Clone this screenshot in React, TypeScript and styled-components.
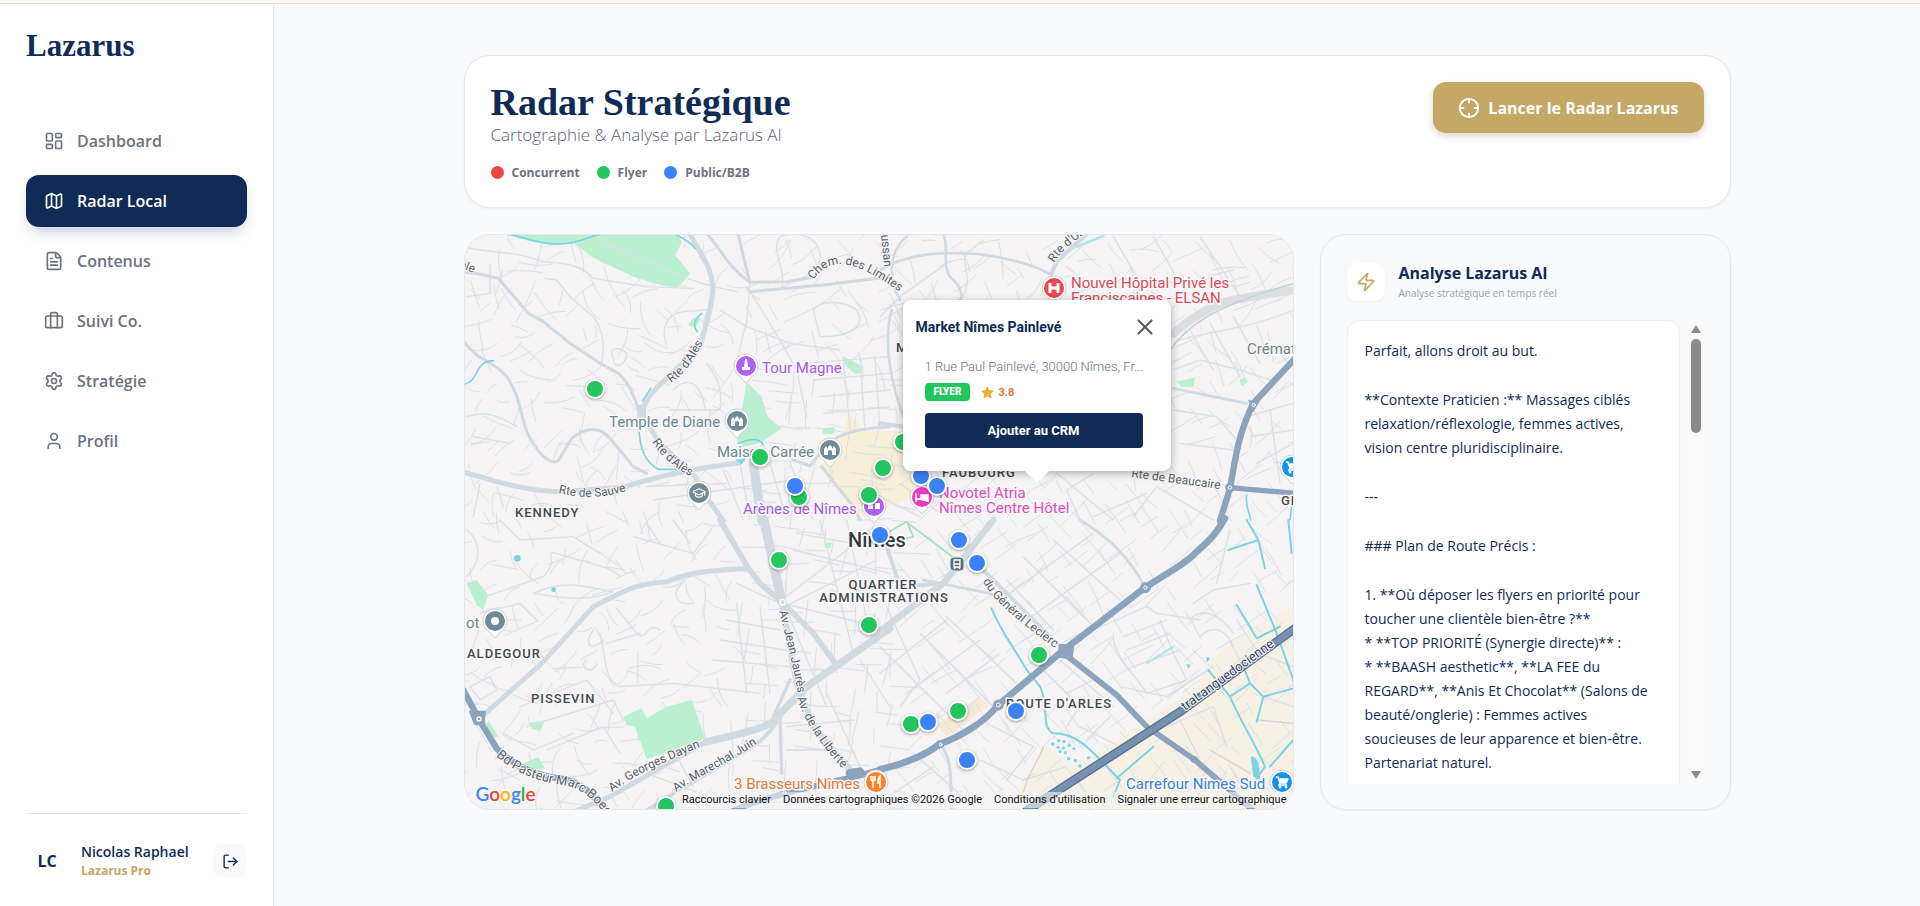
import React from "react";
import styled, { createGlobalStyle } from "styled-components";
import {
  Briefcase,
  Crosshair,
  FileText,
  GraduationCap,
  LayoutDashboard,
  LogOut,
  Map as MapIcon,
  Settings,
  User,
  X,
  Zap,
} from "lucide-react";

const navy = "#0f2b56";
const gold = "#c5a866";
const grey = "#6b7280";
const line = "#e5e7eb";
const sans = `"Segoe UI", "Open Sans", "Noto Sans", sans-serif`;
const serif = `Georgia, "Liberation Serif", serif`;
const roboto = `Roboto, "Liberation Sans", sans-serif`;

const GlobalStyle = createGlobalStyle`
  *, *::before, *::after { box-sizing: border-box; }
  body { margin: 0; background: #f9fafb; font-family: ${sans}; color: ${navy}; }
  button { font: inherit; border: 0; padding: 0; cursor: pointer; }
  h1, h2, h3, p, ul { margin: 0; padding: 0; }
`;

/* ---------- shell ---------- */

const Page = styled.div`
  min-height: 100vh;
  display: flex;
  flex-direction: column;
`;

const TopStrip = styled.div`
  height: 4px;
  background: #fff8f3;
  border-bottom: 1px solid #ecdfd8;
`;

const Shell = styled.div`
  flex: 1;
  display: flex;
`;

const Sidebar = styled.aside`
  width: 274px;
  flex: none;
  display: flex;
  flex-direction: column;
  padding: 24px 26px;
  background: #fff;
  border-right: 1px solid ${line};
`;

const Brand = styled.div`
  font: 700 31px/36px ${serif};
  color: ${navy};
`;

const Nav = styled.nav`
  margin-top: 51px;
  display: flex;
  flex-direction: column;
  gap: 8px;
`;

const NavLink = styled.a<{ $active?: boolean }>`
  height: 52px;
  display: flex;
  align-items: center;
  gap: 13px;
  padding: 0 18px;
  border-radius: 13px;
  font-size: 16px;
  font-weight: 600;
  text-decoration: none;
  color: ${(p) => (p.$active ? "#fff" : grey)};
  background: ${(p) => (p.$active ? navy : "transparent")};
  box-shadow: ${(p) => (p.$active ? "0 8px 14px -4px rgba(15, 43, 86, 0.25)" : "none")};
`;

const Account = styled.div`
  margin-top: auto;
  padding-top: 26px;
  border-top: 1px solid ${line};
  display: flex;
  align-items: center;
`;

const Initials = styled.div`
  width: 42px;
  height: 42px;
  display: grid;
  place-items: center;
  font-size: 16px;
  font-weight: 700;
`;

const AccountText = styled.div`
  flex: 1;
  padding-left: 13px;
  white-space: nowrap;
`;

const AccountName = styled.p`
  font-size: 14px;
  line-height: 20px;
  font-weight: 600;
`;

const AccountPlan = styled.p`
  font-size: 12px;
  line-height: 18px;
  font-weight: 700;
  color: ${gold};
`;

const LogoutButton = styled.button`
  width: 34px;
  height: 34px;
  display: grid;
  place-items: center;
  border-radius: 10px;
  background: #f9fafb;
  color: ${navy};
`;

const Main = styled.main`
  flex: 1;
  min-width: 0;
  padding: 51px 26px;
`;

const Content = styled.div`
  max-width: 1267px;
  margin: 0 auto;
  display: flex;
  flex-direction: column;
  gap: 26px;
`;

/* ---------- header card ---------- */

const HeaderCard = styled.header`
  display: flex;
  justify-content: space-between;
  align-items: flex-start;
  padding: 26px;
  background: #fff;
  border: 1px solid ${line};
  border-radius: 26px;
  box-shadow: 0 1px 3px rgba(15, 23, 42, 0.05);
`;

const Title = styled.h1`
  font: 700 38px/40px ${serif};
`;

const Subtitle = styled.p`
  font-size: 17px;
  line-height: 26px;
  font-weight: 300;
  color: #5c6472;
`;

const Legend = styled.ul`
  margin-top: 16px;
  display: flex;
  gap: 17px;
  list-style: none;
`;

const LegendItem = styled.li<{ $color: string }>`
  display: flex;
  align-items: center;
  gap: 8px;
  font-size: 12px;
  line-height: 17px;
  font-weight: 700;
  color: ${grey};
  &::before {
    content: "";
    width: 13px;
    height: 13px;
    border-radius: 50%;
    background: ${(p) => p.$color};
  }
`;

const LaunchButton = styled.button`
  height: 51px;
  display: flex;
  align-items: center;
  gap: 8px;
  padding: 0 25px;
  border-radius: 13px;
  background: ${gold};
  color: #fff;
  font-size: 16px;
  font-weight: 700;
  white-space: nowrap;
  box-shadow: 0 3px 6px rgba(80, 55, 10, 0.2);
`;

/* ---------- body ---------- */

const Columns = styled.div`
  display: grid;
  grid-template-columns: minmax(0, 830fr) minmax(0, 411fr);
  gap: 26px;
`;

const MapCard = styled.section`
  position: relative;
  height: 576px;
  overflow: hidden;
  border: 1px solid ${line};
  border-radius: 26px;
  background: #f5f4f5;
  font-family: ${roboto};
`;

const MapDrawing = styled.svg`
  display: block;
  width: 100%;
  height: 100%;
  font-family: ${roboto};
`;

const Marker = styled.button<{ $x: number; $y: number; $color: string }>`
  position: absolute;
  left: ${(p) => p.$x}px;
  top: ${(p) => p.$y}px;
  width: 20px;
  height: 20px;
  margin: -10px 0 0 -11px;
  border: 2px solid #fff;
  border-radius: 50%;
  background: ${(p) => p.$color};
  box-shadow: 0 1px 3px rgba(0, 0, 0, 0.35);
`;

const Popup = styled.div`
  position: absolute;
  left: 438px;
  top: 65px;
  width: 268px;
  height: 171px;
  padding: 13px;
  border-radius: 8px;
  background: #fff;
  box-shadow: 0 2px 8px rgba(0, 0, 0, 0.3);
  &::after {
    content: "";
    position: absolute;
    left: 50%;
    top: 100%;
    margin-left: -12px;
    border: 12px solid transparent;
    border-top-color: #fff;
    border-bottom: 0;
  }
`;

const PopupHead = styled.div`
  display: flex;
  align-items: center;
  justify-content: space-between;
  height: 27px;
`;

const PopupTitle = styled.h2`
  font-size: 14px;
  font-weight: 700;
`;

const CloseButton = styled.button`
  display: grid;
  background: none;
  color: #5c5c5c;
`;

const PopupBody = styled.div`
  padding: 17px 15px 0 9px;
`;

const Address = styled.p`
  font-size: 13px;
  line-height: 20px;
  font-weight: 300;
  color: ${grey};
  white-space: nowrap;
`;

const Tags = styled.div`
  display: flex;
  align-items: center;
  gap: 11px;
  margin-top: 6px;
  height: 18px;
`;

const Badge = styled.span`
  padding: 0 9px;
  border-radius: 4px;
  background: #22c55e;
  color: #fff;
  font-size: 10px;
  line-height: 18px;
  font-weight: 900;
`;

const Rating = styled.span`
  display: flex;
  align-items: center;
  gap: 4px;
  font-size: 11px;
  font-weight: 700;
  color: #e8792b;
`;

const CrmButton = styled.button`
  width: 100%;
  height: 35px;
  margin-top: 12px;
  border-radius: 4px;
  background: ${navy};
  color: #fff;
  font-size: 13px;
  font-weight: 700;
`;

const Attribution = styled.div`
  position: absolute;
  right: 0;
  bottom: 1px;
  display: flex;
  height: 16px;
  background: rgba(245, 245, 245, 0.6);
`;

const AttributionLink = styled.a`
  padding: 0 6px;
  font-size: 11px;
  line-height: 16px;
  color: #111;
  text-decoration: none;
  white-space: nowrap;
`;

const GoogleMark = styled.a`
  position: absolute;
  left: 11px;
  bottom: 2px;
  font: 600 19px/26px Lato, sans-serif;
  text-decoration: none;
`;

const Letter = styled.span<{ $color: string }>`
  color: ${(p) => p.$color};
`;

const Panel = styled.section`
  height: 576px;
  display: flex;
  flex-direction: column;
  padding: 26px 26px 25px;
  border: 1px solid ${line};
  border-radius: 26px;
  box-shadow: 0 1px 2px rgba(15, 23, 42, 0.05);
`;

const PanelHead = styled.div`
  display: flex;
  align-items: center;
  gap: 14px;
  height: 41px;
`;

const ZapTile = styled.div`
  width: 38px;
  height: 38px;
  display: grid;
  place-items: center;
  border-radius: 9px;
  background: #fff;
  color: ${gold};
  box-shadow: 0 1px 2px rgba(15, 23, 42, 0.06);
`;

const PanelTitle = styled.h2`
  font-size: 16px;
  line-height: 22px;
  font-weight: 700;
`;

const PanelNote = styled.p`
  font-size: 10px;
  line-height: 18px;
  color: #9ca3af;
`;

const Scroller = styled.div`
  flex: 1;
  min-height: 0;
  margin-top: 18px;
  display: flex;
  gap: 8px;
`;

const Report = styled.div`
  flex: 1;
  min-width: 0;
  overflow: hidden;
  display: flex;
  flex-direction: column;
  gap: 25px;
  padding: 18px 17px 0;
  border: 1px solid #f0f1f4;
  border-bottom: 0;
  border-radius: 13px 13px 0 0;
  background: #fff;
`;

const Paragraph = styled.p`
  font-size: 14px;
  line-height: 24px;
  white-space: pre-line;
`;

const Track = styled.div`
  width: 16px;
  display: flex;
  flex-direction: column;
  align-items: center;
  padding: 5px 0;
  background: #fbfbfc;
`;

const Arrow = styled.span<{ $down?: boolean }>`
  border: 5px solid transparent;
  ${(p) =>
    p.$down
      ? "margin-top: auto; border-top: 8px solid #8b8b8b; border-bottom: 0;"
      : "border-bottom: 8px solid #8b8b8b; border-top: 0;"}
`;

const Thumb = styled.div`
  width: 10px;
  height: 94px;
  margin-top: 6px;
  border-radius: 5px;
  background: #8b8b8b;
`;

/* ---------- map data ---------- */

const nav = [
  { label: "Dashboard", icon: LayoutDashboard },
  { label: "Radar Local", icon: MapIcon, active: true },
  { label: "Contenus", icon: FileText },
  { label: "Suivi Co.", icon: Briefcase },
  { label: "Stratégie", icon: Settings },
  { label: "Profil", icon: User },
];

const GREEN = "#22c55e";
const BLUE = "#3b82f6";

const markers: [number, number, string][] = [
  [131, 154, GREEN],
  [296, 222, GREEN],
  [419, 233, GREEN],
  [439, 207, GREEN],
  [405, 260, GREEN],
  [335, 262, GREEN],
  [315, 325, GREEN],
  [405, 390, GREEN],
  [202, 571, GREEN],
  [575, 420, GREEN],
  [494, 476, GREEN],
  [447, 489, GREEN],
  [331, 251, BLUE],
  [457, 241, BLUE],
  [473, 251, BLUE],
  [416, 300, BLUE],
  [495, 305, BLUE],
  [513, 328, BLUE],
  [552, 476, BLUE],
  [464, 487, BLUE],
  [503, 525, BLUE],
];

/** Deterministic side streets, following the dominant street direction of each district. */
function sideStreets(): string {
  let seed = 7;
  const rnd = () => {
    seed = (seed * 16807) % 2147483647;
    return seed / 2147483647;
  };
  const out: string[] = [];
  for (let y = 4; y < 575; y += 20) {
    for (let x = 4; x < 830; x += 21) {
      const px = x + rnd() * 14;
      const py = y + rnd() * 14;
      let base: number;
      let loose = 0.3;
      if (px < 270) {
        base = rnd() * 3;
        loose = 1;
      } else if (px < 430 && py > 130) {
        base = 0.1;
        loose = 0.2;
      } else if (py < 230) {
        base = -0.5;
        loose = 0.6;
      } else {
        base = -0.65;
        loose = 0.25;
      }
      const a = base + (rnd() < 0.5 ? Math.PI / 2 : 0) + (rnd() - 0.5) * loose;
      const len = 12 + rnd() * 22;
      const mx = px + Math.cos(a) * len * 0.5;
      const my = py + Math.sin(a) * len * 0.5;
      const bend = a + (rnd() - 0.5) * loose * 2;
      const ex = mx + Math.cos(bend) * len * 0.6;
      const ey = my + Math.sin(bend) * len * 0.6;
      out.push(
        `M${px.toFixed(1)} ${py.toFixed(1)}Q${mx.toFixed(1)} ${my.toFixed(1)} ${ex.toFixed(1)} ${ey.toFixed(1)}`
      );
    }
  }
  return out.join("");
}

const streets = sideStreets();

type TileProps = { x: number; y: number; children: React.ReactNode };

/** A quarter of the map, drawn at three times its displayed size. */
const Tile = ({ x, y, children }: TileProps) => (
  <g transform={`translate(${x} ${y}) scale(0.33333)`} fill="none" strokeLinecap="round" strokeLinejoin="round">
    {children}
  </g>
);

const ROAD = "#d1dae1";
const SMALL = "#dae1e7";
const WATER = "#7dd3e3";
const PARK = "#baf0d0";
const HIGHWAY = "#8ba3bd";

const BaseMap = () => (
  <>
    <rect width="830" height="575" fill="#f5f3f4" />
    {/* commercial and rural land */}
    <path d="M385 178 L400 196 L450 196 L450 262 L400 282 L385 270 L354 232 L372 218 Z" fill="#f8efd9" />
    <path d="M829 370 L790 392 L745 425 L735 450 L600 540 L560 574 L829 574 Z" fill="#f6f1e4" />
    <path d="M580 510 L622 538 L570 574 L545 574 Z" fill="#f6f1e4" />
    <path d="M473 490 L515 462 L525 470 L483 502 Z" fill="#f7ead4" />
    <path d={streets} fill="none" stroke={SMALL} strokeWidth="1" />

    <Tile x={-4} y={-5}>
      <g fill={PARK}>
        <path d="M130 12 L655 12 L665 40 L645 75 L690 130 L655 172 C600 170 560 150 520 140 C460 110 400 90 370 60 L340 40 C300 45 260 42 215 35 Z" />
        <path d="M860 455 L905 500 L922 560 L965 595 L900 640 L850 650 L830 630 Z" />
        <path d="M700 262 L722 265 L705 295 L685 285 Z" />
        <path d="M1150 380 L1210 410 L1205 430 L1185 432 L1155 405 Z" />
        <path d="M1090 595 L1125 592 L1120 612 L1088 612 Z" />
      </g>
      <g stroke={SMALL} strokeWidth="4">
        <path d="M410 12 C440 60 520 70 580 100 C640 130 700 160 830 185" />
        <path d="M12 50 C80 70 160 60 250 95 C330 100 370 110 400 145 L560 170 L700 175" />
        <path d="M90 105 L90 190 L20 200" />
        <path d="M255 145 L290 150 L330 200 L400 260 C430 300 435 350 425 400" />
        <path d="M460 385 C440 350 480 350 500 370 C500 410 460 420 460 385" />
        <path d="M620 345 C600 300 620 250 670 245 L740 240" />
        <path d="M740 400 C760 430 790 460 780 540 L630 540 M640 480 C680 440 720 450 735 535" />
        <path d="M965 175 C980 120 930 60 960 20 C1010 0 1080 20 1080 80 C1080 140 990 150 965 175" />
        <path d="M1060 240 C1080 210 1150 210 1190 240 C1220 290 1170 320 1080 320 Z" />
        <path d="M780 240 L860 290 L990 340 L1140 360 M860 170 C900 230 950 310 1010 420 L1040 560" />
        <path d="M830 400 L850 310 L860 280 L870 160" />
        <path d="M1030 400 L1290 380 M1060 450 L1290 430 M1080 500 L1290 480 M1090 550 L1290 530 M1150 380 L1170 600 M1200 380 L1215 600 M1245 380 L1260 600" />
        <path d="M560 770 L800 760 M580 810 L1000 750 M790 720 L850 870 M840 700 L870 870 M930 700 L980 870 M990 700 L1060 870" />
        <path d="M20 560 C80 540 120 560 170 590 M40 620 L150 640 M60 760 L40 860 M110 770 L130 830" />
      </g>
      <g stroke={ROAD}>
        <g strokeWidth="9">
          <path d="M0 125 L45 130 L115 145 L205 250 L250 275 L330 340 L420 400 L475 430 C520 470 525 520 545 560" />
          <path d="M12 335 C60 400 100 390 140 440 C190 510 180 590 220 640 C250 690 285 710 300 685 L335 625 C380 590 420 590 450 625 L520 710 L560 730" />
          <path d="M740 12 C780 50 800 110 870 157 L980 155 L1060 142" />
          <path d="M835 12 L850 80 L870 157" />
          <path d="M870 185 L1090 165 L1290 140" />
          <path d="M1000 690 L1050 708 C1100 650 1100 600 1290 590" />
          <path d="M1085 710 L1180 830 L1200 870" />
        </g>
        <path d="M0 725 L60 740 C150 770 250 785 300 785 L490 772 C600 735 700 715 840 698" strokeWidth="15" />
        <path d="M690 12 C720 70 755 110 758 170 C758 230 735 290 720 350 L620 445 C570 490 545 520 548 560 L600 640 L705 740 L745 810 L790 872" strokeWidth="15" />
        <path d="M880 700 L905 872" strokeWidth="28" />
        <path d="M545 525 L545 590" strokeWidth="26" strokeLinecap="butt" />
      </g>
      <g stroke={WATER} strokeWidth="5">
        <path d="M140 12 C200 22 240 45 300 42 C360 40 380 20 420 14" />
        <path d="M15 462 C60 450 40 395 100 392" />
        <path d="M725 250 C700 270 700 290 712 305 M572 475 L548 512" />
        <path d="M537 600 C540 660 560 700 595 718 L690 718" />
        <path d="M650 15 C670 25 690 35 705 55" />
        <path d="M835 640 C860 630 900 620 910 645" />
      </g>
      <path d="M825 690 L860 684 L845 702 Z" fill={WATER} />
    </Tile>

    <Tile x={416} y={-5}>
      <g fill={PARK}>
        <path d="M890 455 L945 442 L940 470 L905 470 Z" />
        <path d="M1078 450 L1095 442 L1105 455 L1085 468 Z" />
      </g>
      <g stroke={SMALL} strokeWidth="4">
        <path d="M0 260 L60 200 L200 100 M250 200 C280 130 240 100 260 70 L310 30" />
        <path d="M560 110 L640 170 L760 140 L900 160 L1060 120 M700 20 L770 140 M820 20 L900 160 M960 20 L1080 200" />
        <path d="M900 330 C1000 300 1100 300 1240 240 M930 300 L1000 420 M990 280 L1080 440 M1060 260 L1140 400" />
        <path d="M880 420 L960 390 L1080 420 L1170 450 M880 540 L1010 560 L1080 640 M900 640 L1060 660" />
        <path d="M600 870 L560 780 L640 730 M640 860 L800 790 M760 860 L830 770 L1000 870" />
        <path d="M1100 560 L1240 520 M1110 620 L1240 600 M1130 700 L1240 640 M1170 540 L1200 760" />
        <path d="M0 800 L120 860 M60 760 L180 850 M530 730 L700 870" />
      </g>
      <g stroke={ROAD}>
        <g strokeWidth="8">
          <path d="M190 12 C210 60 180 120 220 150 C260 190 240 220 235 210" />
          <path d="M0 120 C80 70 180 65 290 72 C400 85 470 110 515 135" />
          <path d="M80 20 C30 60 20 140 60 210 M35 240 C10 330 30 450 70 560" />
          <path d="M515 130 L530 95 L620 12" strokeWidth="12" />
          <path d="M880 475 L1100 520" />
          <path d="M0 580 L70 590" strokeWidth="12" />
        </g>
        <path d="M880 310 C940 260 1000 220 1060 210 C1120 200 1180 185 1245 182" strokeWidth="26" stroke="#dcdfe2" />
        <path d="M870 360 C920 290 990 230 1245 160" strokeWidth="5" stroke="#c9d3da" />
      </g>
      <g stroke={WATER} strokeWidth="5">
        <path d="M590 50 L670 18" strokeWidth="8" stroke="#b4e4ee" />
        <path d="M1100 795 C1095 830 1110 850 1112 870 M1240 790 L1230 870" />
      </g>
      <g stroke={HIGHWAY}>
        <path d="M1245 385 L1120 520 C1070 620 1065 700 1050 775 L1020 872" strokeWidth="19" />
        <path d="M1050 773 L1245 790" strokeWidth="16" />
        <path d="M1105 510 L1138 515 L1120 545 Z" fill={HIGHWAY} />
        <circle cx="1050" cy="773" r="14" fill={HIGHWAY} />
      </g>
      <circle cx="1121" cy="525" r="5" stroke="#fff" strokeWidth="3" />
      <circle cx="1050" cy="773" r="5" stroke="#fff" strokeWidth="3" />
    </Tile>

    <Tile x={-4} y={285}>
      <g fill={PARK}>
        <path d="M490 590 L545 565 L560 595 L620 560 L695 540 L735 655 L560 718 L525 620 L500 615 Z" />
        <path d="M20 190 L50 180 L85 225 L70 270 L50 255 Z" />
        <path d="M85 600 L115 650 L100 655 L80 625 Z M205 610 L255 600 L240 635 L215 625 Z M190 730 L235 712 L255 745 L220 750 Z" />
        <path d="M1092 70 L1115 68 L1112 85 L1095 84 Z" />
      </g>
      <g stroke={SMALL} strokeWidth="4">
        <path d="M20 30 C60 60 70 120 20 170 M75 230 L250 170 C300 120 250 90 290 100 C380 130 460 140 480 170" />
        <path d="M220 220 C330 170 400 210 460 215 C380 250 280 230 220 220 M470 265 L530 340 C560 370 560 300 600 330" />
        <path d="M420 340 C440 420 430 480 480 500 L640 490 L900 520 M440 370 L540 340 M680 180 C630 210 640 260 700 250" />
        <path d="M400 330 C370 370 390 400 430 360 M410 430 C400 470 350 440 380 420" />
        <path d="M180 560 L380 480 L460 580 M200 620 L460 540 L490 600 M260 690 L430 620 L480 700 M130 640 L220 690 L340 640" />
        <path d="M30 500 L90 470 L110 510 L60 540 Z M60 280 L180 250 L230 300" />
        <path d="M960 250 L830 190 M970 250 L1290 330 M965 240 L1200 60 M975 260 L1250 120 M980 270 L1100 560" />
        <path d="M1010 40 L1290 90 M1000 90 L1290 160 M1080 0 L1180 400 M1160 0 L1220 300 M800 300 L960 330 M780 360 L980 390 M760 420 L990 440 M830 250 L860 520 M900 260 L930 520" />
        <path d="M640 690 L700 800 M560 760 L720 820 M980 620 L1180 600 M980 690 L1120 690 M1100 520 L1200 740 M1200 420 L1290 560" />
        <path d="M520 50 L700 100 L760 20 M120 0 L180 60 L340 50 L420 100 M560 10 L600 70 M640 0 L690 70" />
      </g>
      <g stroke={ROAD}>
        <path d="M65 590 L245 430 L400 260 C480 220 520 190 620 185 C700 150 780 150 865 145" strokeWidth="15" />
        <path d="M780 0 L865 145 L900 190 L965 245 L1060 340 L1130 435" strokeWidth="17" />
        <path d="M912 0 L965 245" strokeWidth="28" />
        <path d="M965 245 L1010 490 L1060 620 L1180 760" strokeWidth="18" />
        <path d="M1290 325 L1040 500 L960 580 C950 620 850 640 740 665" strokeWidth="22" />
        <path d="M740 665 L450 830 L350 872" strokeWidth="15" />
        <path d="M960 590 C930 640 900 670 860 690 L640 820 L560 872" strokeWidth="12" />
        <path d="M960 590 L965 760 M990 480 L940 590" strokeWidth="10" />
      </g>
      <circle cx="968" cy="247" r="8" stroke="#fff" strokeWidth="4" />
      <g fill={WATER}>
        <circle cx="172" cy="115" r="10" />
        <circle cx="281" cy="209" r="7" />
      </g>
      <g stroke={HIGHWAY}>
        <path d="M10 510 L55 595 L110 685 C160 740 240 770 300 775 C370 785 400 830 440 872" strokeWidth="19" />
        <path d="M30 575 L75 575 L70 615 L45 612 Z" fill={HIGHWAY} strokeWidth="6" />
        <path d="M820 872 C960 810 1180 780 1290 740" strokeWidth="18" />
        <path d="M1170 760 L1200 755" strokeWidth="26" />
      </g>
      <circle cx="57" cy="597" r="6" stroke="#fff" strokeWidth="4" />
      <circle cx="974" cy="818" r="5" stroke="#fff" strokeWidth="3" />
    </Tile>

    <Tile x={416} y={285}>
      <g stroke={SMALL} strokeWidth="4">
        <path d="M380 180 L520 330 M430 110 L620 300 M520 60 L720 240 M360 240 L640 40 M440 300 L720 100 M640 320 L560 230" />
        <path d="M640 330 L800 260 L830 280 L960 300 M700 340 C690 400 780 480 800 520 L920 480 L880 400 L840 300" />
        <path d="M730 350 L860 300 M740 390 L870 340 M760 440 L900 390 M720 500 L860 530 L1000 440" />
        <path d="M940 250 L1000 210 L1110 190 M930 300 C960 260 1020 280 1060 340 M960 350 C1000 310 1040 330 1060 380 M1010 190 L1050 30" />
        <path d="M0 380 L260 640 M20 260 L120 480 L60 560 M120 340 L340 560 M200 290 L420 500 M0 460 L200 300 M80 520 L300 360 M200 520 L360 400" />
        <path d="M200 660 L300 600 L460 680 L380 780 M100 700 L260 840 M10 840 L160 740 M300 720 L430 780 L560 740" />
        <path d="M480 440 L600 560 L560 620 M540 420 L700 560 M600 620 L720 680 L790 660 M640 480 L560 520 M690 590 L620 660" />
        <path d="M860 620 L1000 560 L1040 680 M900 600 L960 720 M1070 300 L1150 420 M1110 390 L1240 440 M1120 520 L1240 560 M1050 740 L1080 790" />
        <path d="M490 680 C480 720 440 760 430 820 M990 690 L1110 760 M1130 600 L1240 610" stroke="#d3d3d6" />
      </g>
      <g stroke={ROAD}>
        <path d="M0 335 L70 280 L190 190 L340 0" strokeWidth="20" />
        <path d="M130 180 L330 220 L370 240 M600 0 C700 60 750 120 795 200" strokeWidth="8" />
        <path d="M0 20 L60 200 L190 190 M310 150 L545 385" strokeWidth="12" />
        <path d="M180 672 C220 720 210 780 215 872" strokeWidth="9" />
      </g>
      <path d="M85 10 L230 120 M20 40 L80 5 L100 50 L60 60 Z" stroke="#a8dcc0" strokeWidth="5" />
      <g stroke={WATER} strokeWidth="6">
        <path d="M335 265 C360 330 400 380 440 450 L480 500 C510 560 480 620 520 640 C600 640 640 700 720 780 L700 830" />
        <path d="M1100 0 L1135 60 L1045 90 M1135 60 L1155 145 M1225 0 L1235 100" />
        <path d="M1130 195 L1190 340 L1240 480 M1070 255 L1130 355 L1200 320" />
        <path d="M985 450 L1050 530 C1080 600 1120 660 1155 740 L1120 790 M1050 530 L1110 490 L1090 440 M1110 490 L1150 530 L1130 605 M1150 530 L1240 505" />
        <path d="M820 680 L710 775 M1240 660 L1170 740" />
        <path d="M800 430 L880 380" stroke="#b8e2ec" />
      </g>
      <g fill={WATER}>
        {[
          [518, 672], [536, 662], [552, 664], [534, 682], [550, 684], [568, 676], [582, 686],
          [540, 694], [556, 698], [566, 716], [586, 722], [600, 738], [626, 713],
        ].map(([cx, cy]) => (
          <circle key={`${cx}-${cy}`} cx={cx} cy={cy} r="5" />
        ))}
      </g>
      <path d="M1112 710 C1130 705 1140 730 1140 780 L1120 770 Z M980 410 L990 415 L980 428 Z M918 432 L932 434 L925 446 Z" fill={WATER} />
      <g stroke={HIGHWAY}>
        <path d="M0 748 C60 735 130 710 180 672 C240 650 310 610 355 555 L545 395 L795 203 C860 160 920 130 950 95 C990 60 1010 40 1035 -5" strokeWidth="20" />
        <path d="M545 395 L710 525 L800 620 L945 720 L1120 872" strokeWidth="17" />
        <path d="M540 375 L580 375 L575 415 L535 410 Z" fill={HIGHWAY} strokeWidth="6" />
        <g fill={HIGHWAY}>
          <circle cx="355" cy="555" r="16" />
          <circle cx="180" cy="673" r="12" />
          <circle cx="796" cy="203" r="16" />
          <circle cx="942" cy="718" r="10" />
        </g>
      </g>
      <path d="M440 872 L905 572 L1245 325" stroke="#57708f" strokeWidth="27" />
      <path d="M440 872 L905 572 L1245 325" stroke="#7891b0" strokeWidth="19" />
      <g stroke="#fff" strokeWidth="3">
        <circle cx="355" cy="555" r="6" />
        <circle cx="182" cy="674" r="4" />
        <circle cx="796" cy="203" r="5" />
      </g>
    </Tile>
  </>
);

type LabelProps = {
  x: number;
  y: number;
  color?: string;
  size?: number;
  spaced?: boolean;
  middle?: boolean;
  children: string;
};

const PlaceLabel = ({ x, y, color = "#6d8591", size = 15, spaced, middle, children }: LabelProps) => (
  <text
    x={x}
    y={y}
    fill={color}
    fontSize={size}
    fontWeight={spaced ? 500 : 400}
    letterSpacing={spaced ? 1 : 0}
    textAnchor={middle ? "middle" : "start"}
    stroke="#f8f8f9"
    strokeWidth="3"
    paintOrder="stroke"
  >
    {children}
  </text>
);

const DistrictLabel = ({ x, y, middle, children }: LabelProps) => (
  <PlaceLabel x={x} y={y} color="#43484d" size={13} spaced middle={middle}>
    {children}
  </PlaceLabel>
);

const roadNames: { id: string; d: string; text: string; size?: number }[] = [
  { id: "r1", d: "M207 148 C222 138 232 122 243 100", text: "Rte d'Alès" },
  { id: "r2", d: "M188 207 C198 222 210 234 236 246", text: "Rte d'Alès" },
  { id: "r3", d: "M94 258 C120 264 140 264 175 252", text: "Rte de Sauve" },
  { id: "r4", d: "M349 45 C368 20 390 24 440 60", text: "Chem. des Limites" },
  { id: "r5", d: "M417 0 L422 50", text: "ussan" },
  { id: "r6", d: "M590 28 C600 12 615 2 640 -14", text: "Rte d'Uzès" },
  { id: "r7", d: "M-12 30 L20 42", text: "ople" },
  { id: "r8", d: "M667 242 L770 256", text: "Rte de Beaucaire" },
  { id: "r9", d: "M315 376 C324 410 330 435 336 470", text: "Av. Jean Jaurès" },
  { id: "r10", d: "M333 463 C342 490 358 512 390 546", text: "Av. de la Liberté" },
  { id: "r11", d: "M148 557 C175 536 205 526 245 508", text: "Av. Georges Dayan" },
  { id: "r12", d: "M212 557 C240 538 265 528 300 504", text: "Av. Marechal Juin" },
  { id: "r13", d: "M32 521 C55 541 80 548 105 551 C125 558 135 570 150 592", text: "Bd Pasteur Marc Boec", size: 13 },
  { id: "r14", d: "M519 346 C530 368 560 390 600 420", text: "du Général Leclerc" },
  { id: "r15", d: "M721 476 L835 393", text: "traLanguedocienne", size: 13 },
];

type PinProps = { x: number; y: number; color: string; tail?: boolean; children?: React.ReactNode };

const Pin = ({ x, y, color, tail = true, children }: PinProps) => (
  <g transform={`translate(${x} ${y})`}>
    {tail && <path d="M-9 7 L0 17 L9 7 Z" fill="#fff" stroke="#c9ced2" strokeWidth="1" />}
    <circle r="12" fill="#fff" stroke="#d0d4d7" strokeWidth="1" />
    {tail && <path d="M-8 8 L0 15 L8 8 Z" fill="#fff" />}
    <circle r="10" fill={color} />
    {children}
  </g>
);

const Castle = () => (
  <path d="M-6 5 V-1 L-4 -4 L-2 -1 V-3 L0 -5 L2 -3 V-1 L4 -4 L6 -1 V5 H2 V2 A2 2 0 0 0 -2 2 V5 Z" fill="#fff" />
);

const Cart = () => (
  <g fill="none" stroke="#fff" strokeWidth="1.6">
    <path d="M-6 -5 H-4 L-2 1 H4 L6 -3 H-3" fill="#fff" strokeLinejoin="round" />
    <path d="M-2 1 L-3 3 H5" />
    <circle cx="-2" cy="5" r="0.6" />
    <circle cx="4" cy="5" r="0.6" />
  </g>
);

const MapLabels = () => (
  <>
    {roadNames.map((r) => (
      <g key={r.id}>
        <path id={r.id} d={r.d} fill="none" />
        <text
          fontSize={r.size ?? 12}
          fill={r.id === "r15" ? "#2f4360" : "#56616a"}
          stroke="#f6f6f7"
          strokeWidth="2"
          paintOrder="stroke"
        >
          <textPath href={`#${r.id}`}>{r.text}</textPath>
        </text>
      </g>
    ))}
    <PlaceLabel x={298} y={138} color="#a25be0">Tour Magne</PlaceLabel>
    <PlaceLabel x={145} y={192}>Temple de Diane</PlaceLabel>
    <PlaceLabel x={253} y={222}>Maison Carrée</PlaceLabel>
    <PlaceLabel x={279} y={279} color="#a25be0">Arènes de Nîmes</PlaceLabel>
    <PlaceLabel x={607} y={53} color="#d94b57">Nouvel Hôpital Privé les</PlaceLabel>
    <PlaceLabel x={607} y={68} color="#d94b57">Franciscaines - ELSAN</PlaceLabel>
    <PlaceLabel x={783} y={119}>Crémat</PlaceLabel>
    <PlaceLabel x={475} y={263} color="#e04cc2">Novotel Atria</PlaceLabel>
    <PlaceLabel x={475} y={278} color="#e04cc2">Nîmes Centre Hôtel</PlaceLabel>
    <PlaceLabel x={2} y={393}>ot</PlaceLabel>
    <PlaceLabel x={270} y={554} color="#dd7a3c">3 Brasseurs Nîmes</PlaceLabel>
    <PlaceLabel x={662} y={554} color="#3a80dc">Carrefour Nimes Sud</PlaceLabel>
    <DistrictLabel x={51} y={282}>KENNEDY</DistrictLabel>
    <DistrictLabel x={3} y={423}>ALDEGOUR</DistrictLabel>
    <DistrictLabel x={67} y={468}>PISSEVIN</DistrictLabel>
    <DistrictLabel x={478} y={242}>FAUBOURG</DistrictLabel>
    <DistrictLabel x={432} y={117}>MAS</DistrictLabel>
    <DistrictLabel x={817} y={270}>GR</DistrictLabel>
    <DistrictLabel x={419} y={354} middle>QUARTIER</DistrictLabel>
    <DistrictLabel x={420} y={367} middle>ADMINISTRATIONS</DistrictLabel>
    <DistrictLabel x={542} y={473}>ROUTE D'ARLES</DistrictLabel>
    <text x="384" y="312" fontSize="20" fontWeight="500" fill="#33383c" stroke="#fff" strokeWidth="3" paintOrder="stroke">
      Nîmes
    </text>

    <Pin x={282} y={131} color="#ae62f2">
      <path d="M-1 -7 H1 L2 1 H4 V4 H-4 V1 H-2 Z" fill="#fff" />
    </Pin>
    <Pin x={273} y={186} color="#708a96"><Castle /></Pin>
    <Pin x={366} y={215} color="#708a96"><Castle /></Pin>
    <Pin x={235} y={258} color="#708a96">
      <GraduationCap x={-7} y={-7} width={14} height={14} color="#fff" />
    </Pin>
    <Pin x={410} y={271} color="#ae62f2">
      <path d="M-6 -3 H-1 V3 H-6 Z M1 -3 H6 V3 H1 Z" fill="#fff" />
    </Pin>
    <Pin x={590} y={53} color="#ec4653" tail={false}>
      <path d="M-4 -5 V5 M4 -5 V5 M-4 0 H4" stroke="#fff" strokeWidth="3" />
    </Pin>
    <Pin x={458} y={262} color="#f038c4">
      <path d="M-6 -4 V5 M-6 2 H6 V5 M6 2 V-2 H-1 V2" stroke="#fff" strokeWidth="1.6" fill="#fff" />
    </Pin>
    <Pin x={828} y={232} color="#1493f0"><Cart /></Pin>
    <Pin x={31} y={386} color="#708a96">
      <circle r="4" fill="#fff" />
    </Pin>
    <Pin x={412} y={547} color="#f9842c">
      <path d="M-3 -6 V6 M-5 -6 V-2 Q-3 0 -1 -2 V-6 M4 6 V-6 Q2 -4 2 1 H4" stroke="#fff" strokeWidth="1.5" fill="none" />
    </Pin>
    <Pin x={818} y={547} color="#1493f0" tail={false}><Cart /></Pin>
    <g transform="translate(493 329)">
      <rect x="-7" y="-7" width="14" height="14" rx="4" fill="#5b6f7b" stroke="#e3e7ea" />
      <path d="M-3 -4 H3 V3 H-3 Z M-3 0 H3 M-3 5 L-1 3 M3 5 L1 3" stroke="#fff" strokeWidth="1.3" fill="none" />
    </g>
  </>
);

const googleLetters: [string, string][] = [
  ["G", "#4285f4"],
  ["o", "#ea4335"],
  ["o", "#fbbc05"],
  ["g", "#4285f4"],
  ["l", "#34a853"],
  ["e", "#ea4335"],
];

const report = [
  "Parfait, allons droit au but.",
  "**Contexte Praticien :** Massages ciblés relaxation/réflexologie, femmes actives, vision centre pluridisciplinaire.",
  "---",
  "### Plan de Route Précis :",
  "1. **Où déposer les flyers en priorité pour toucher une clientèle bien-être ?**\n* **TOP PRIORITÉ (Synergie directe)** :\n* **BAASH aesthetic**, **LA FEE du REGARD**, **Anis Et Chocolat** (Salons de beauté/onglerie) : Femmes actives soucieuses de leur apparence et bien-être. Partenariat naturel.",
];

export default function App() {
  return (
    <Page>
      <GlobalStyle />
      <TopStrip />
      <Shell>
        <Sidebar>
          <Brand>Lazarus</Brand>
          <Nav aria-label="Navigation principale">
            {nav.map(({ label, icon: Icon, active }) => (
              <NavLink key={label} href="#" $active={active} aria-current={active ? "page" : undefined}>
                <Icon size={20} strokeWidth={2} />
                {label}
              </NavLink>
            ))}
          </Nav>
          <Account>
            <Initials>LC</Initials>
            <AccountText>
              <AccountName>Nicolas Raphael</AccountName>
              <AccountPlan>Lazarus Pro</AccountPlan>
            </AccountText>
            <LogoutButton aria-label="Se déconnecter">
              <LogOut size={17} />
            </LogoutButton>
          </Account>
        </Sidebar>

        <Main>
          <Content>
            <HeaderCard>
              <div>
                <Title>Radar Stratégique</Title>
                <Subtitle>Cartographie &amp; Analyse par Lazarus AI</Subtitle>
                <Legend>
                  <LegendItem $color="#ef4444">Concurrent</LegendItem>
                  <LegendItem $color={GREEN}>Flyer</LegendItem>
                  <LegendItem $color={BLUE}>Public/B2B</LegendItem>
                </Legend>
              </div>
              <LaunchButton>
                <Crosshair size={22} />
                Lancer le Radar Lazarus
              </LaunchButton>
            </HeaderCard>

            <Columns>
              <MapCard aria-label="Carte">
                <MapDrawing viewBox="1 0 828 574" preserveAspectRatio="xMinYMin slice">
                  <BaseMap />
                  <MapLabels />
                </MapDrawing>
                {markers.map(([x, y, color]) => (
                  <Marker
                    key={`${x}-${y}`}
                    $x={x}
                    $y={y}
                    $color={color}
                    aria-label={color === GREEN ? "Flyer" : "Public/B2B"}
                  />
                ))}
                <GoogleMark href="#" aria-label="Google">
                  {googleLetters.map(([char, color], i) => (
                    <Letter key={i} $color={color}>{char}</Letter>
                  ))}
                </GoogleMark>
                <Attribution>
                  <AttributionLink href="#">Raccourcis clavier</AttributionLink>
                  <AttributionLink href="#">Données cartographiques ©2026 Google</AttributionLink>
                  <AttributionLink href="#">Conditions d'utilisation</AttributionLink>
                  <AttributionLink href="#">Signaler une erreur cartographique</AttributionLink>
                </Attribution>
                <Popup role="dialog" aria-label="Market Nîmes Painlevé">
                  <PopupHead>
                    <PopupTitle>Market Nîmes Painlevé</PopupTitle>
                    <CloseButton aria-label="Fermer">
                      <X size={26} strokeWidth={2} />
                    </CloseButton>
                  </PopupHead>
                  <PopupBody>
                    <Address>1 Rue Paul Painlevé, 30000 Nîmes, Fr...</Address>
                    <Tags>
                      <Badge>FLYER</Badge>
                      <Rating>
                        <svg width="13" height="13" viewBox="0 0 24 24" fill="#f0b429" stroke="#d99a1c" aria-hidden="true">
                          <path d="M12 1.5 L15.2 8.4 L22.8 9.3 L17.2 14.4 L18.7 22 L12 18.2 L5.3 22 L6.8 14.4 L1.2 9.3 L8.8 8.4 Z" />
                        </svg>
                        3.8
                      </Rating>
                    </Tags>
                    <CrmButton>Ajouter au CRM</CrmButton>
                  </PopupBody>
                </Popup>
              </MapCard>

              <Panel>
                <PanelHead>
                  <ZapTile>
                    <Zap size={20} />
                  </ZapTile>
                  <div>
                    <PanelTitle>Analyse Lazarus AI</PanelTitle>
                    <PanelNote>Analyse stratégique en temps réel</PanelNote>
                  </div>
                </PanelHead>
                <Scroller>
                  <Report>
                    {report.map((text) => (
                      <Paragraph key={text}>{text}</Paragraph>
                    ))}
                  </Report>
                  <Track aria-hidden="true">
                    <Arrow />
                    <Thumb />
                    <Arrow $down />
                  </Track>
                </Scroller>
              </Panel>
            </Columns>
          </Content>
        </Main>
      </Shell>
    </Page>
  );
}
